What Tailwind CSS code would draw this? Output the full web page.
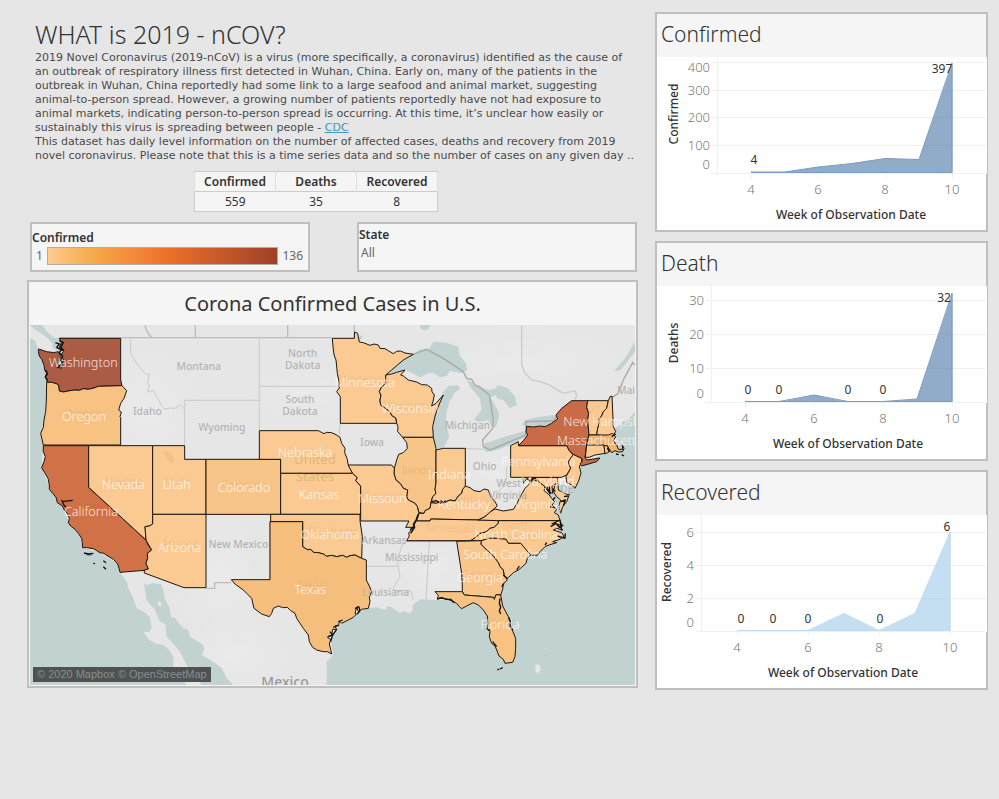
<!DOCTYPE html>
<html lang="en">
<head>
<meta charset="utf-8">
<meta name="viewport" content="width=device-width, initial-scale=1">
<title>2019-nCoV dashboard</title>
<script src="https://cdn.jsdelivr.net/npm/@tailwindcss/browser@4"></script>
</head>
<body class="min-h-screen bg-[#e6e6e6] text-[#333] font-['Noto_Sans','Open_Sans',sans-serif]">
<main class="grid grid-cols-[minmax(0,611fr)_minmax(0,333fr)] items-start gap-[17px] pt-3 pr-[11px] pl-[27px]">
  <div class="flex flex-col">
    <section class="pt-[5px] pl-2">
      <h1 class="text-[25px] leading-[34px] font-light">WHAT is 2019 - nCOV?</h1>
      <p class="whitespace-nowrap font-['DejaVu_Sans',sans-serif] text-[11px] leading-[14px] text-[#4a4a4a]">2019 Novel Coronavirus (2019-nCoV) is a virus (more specifically, a coronavirus) identified as the cause of<br>an outbreak of respiratory illness first detected in Wuhan, China. Early on, many of the patients in the<br>outbreak in Wuhan, China reportedly had some link to a large seafood and animal market, suggesting<br>animal-to-person spread. However, a growing number of patients reportedly have not had exposure to<br>animal markets, indicating person-to-person spread is occurring. At this time, it’s unclear how easily or<br>sustainably this virus is spreading between people - <a href="#cdc" class="text-[#3f97b5] underline">CDC</a><br>This dataset has daily level information on the number of affected cases, deaths and recovery from 2019<br>novel coronavirus. Please note that this is a time series data and so the number of cases on any given day ..</p>
    </section>

    <table class="mt-2 ml-[167px] w-[244px] table-fixed border-collapse border border-[#cccccc] bg-[#f5f5f5] text-center text-[12px] leading-[19px]">
      <thead><tr class="border-b border-[#cccccc]">
        <th class="border-x border-[#dedede] font-semibold">Confirmed</th><th class="border-x border-[#dedede] font-semibold">Deaths</th><th class="border-x border-[#dedede] font-semibold">Recovered</th></tr></thead>
      <tbody><tr><td>559</td><td>35</td><td>8</td></tr></tbody>
    </table>

    <div class="mt-[10px] mr-px ml-[3px] flex justify-between gap-[47px]">
      <section class="h-[50px] flex-1 border-2 border-[#bfbfbf] bg-[#f5f5f5] pt-[6px]">
        <h2 class="text-[12px] leading-[16px] font-semibold">Confirmed</h2>
        <div class="flex h-[20px] items-center gap-1 pr-[5px] pl-1 text-[12px] text-[#666]">
          <span>1</span>
          <div class="h-[18px] flex-1 border border-[#b5ada0] bg-[linear-gradient(to_right,#ffcb8f,#f5a94a_20%,#f58a3a_37%,#ec7128_52%,#c95a2a_74%,#9e4028)]"></div>
          <span>136</span>
        </div>
      </section>
      <section class="h-[50px] flex-1 border-2 border-[#bfbfbf] bg-[#f5f5f5] pt-[3px]">
        <label for="state" class="block text-[12px] leading-[16px] font-semibold">State</label>
        <select id="state" class="block w-full appearance-none bg-transparent pl-[2px] text-[12px] leading-[20px] text-[#666]"><option>All</option></select>
      </section>
    </div>

    <section class="mt-2 border-2 border-[#bfbfbf] bg-[#f5f5f5]">
      <h2 class="text-center text-[20px] leading-[43px]">Corona Confirmed Cases in U.S.</h2>
      <div class="relative px-px pb-px">
        <svg viewBox="30 15 1815 1080" class="block w-full" role="img" aria-label="Map of confirmed cases by state">
          <defs>
            <radialGradient id="relief"><stop offset="0" stop-color="#ebebeb"/><stop offset="1" stop-color="#e7e7e7" stop-opacity="0"/></radialGradient>
          </defs>
          <rect x="30" y="15" width="1815" height="1080" fill="#e6e6e6"/>
          <g fill="url(#relief)">
            <ellipse cx="380" cy="280" rx="170" ry="220"/><ellipse cx="600" cy="760" rx="150" ry="200"/><ellipse cx="640" cy="1000" rx="180" ry="130"/><ellipse cx="1500" cy="130" rx="330" ry="120"/><ellipse cx="1240" cy="740" rx="130" ry="110"/><ellipse cx="1420" cy="450" rx="100" ry="100"/><ellipse cx="850" cy="220" rx="160" ry="90"/>
          </g>
          <g fill="#c1d2d1">
            <path d="M30,55 45,62 52,80 70,95 100,93 120,110 120,150 80,187 78,250 72,300 62,340 70,377 65,443 88,500 133,570 147,608 185,655 188,683 240,698 293,732 300,757 320,785 325,805 340,835 350,865 372,876 390,892 395,925 388,936 370,935 385,958 410,972 430,975 448,990 460,1010 460,1040 480,1070 500,1095 30,1095Z"/>
            <path d="M30,15H66L85,40 105,55 120,50 128,75 120,95 98,85 96,68 78,50 45,28Z"/>
            <path d="M372,792 380,795 400,788 410,792 422,791 430,810 435,840 448,862 453,892 462,892 490,925 505,930 510,950 550,975 552,990 545,1005 580,1025 605,1045 620,1075 640,1095H545L525,1070 500,1035 480,995 455,965 440,950 436,912 420,905 405,870 380,840Z"/>
            <path d="M920,1095V1025L940,1005 930,955 965,910 1015,875 1045,865 1070,862 1095,870 1103,858 1115,862 1140,880 1150,874 1172,880 1178,870 1178,855 1200,838 1245,840 1350,840 1440,830 1450,780 1520,720 1560,690 1610,650 1615,600 1590,530 1580,505 1610,490 1650,500 1680,440 1750,400 1790,370 1780,330 1795,318 1812,300 1825,298 1845,275V1095Z"/>
            <path d="M1097,165 1140,125 1175,105 1200,88 1225,90 1240,65 1280,68 1315,80 1318,105 1338,130 1342,150 1325,160 1290,152 1280,168 1260,172 1240,158 1225,160 1200,172 1175,158 1155,150 1130,157Z"/>
            <path d="M1200,15H1230L1225,28 1212,32 1202,25ZM1010,55 1030,45 1022,60Z"/>
            <path d="M1252,388 1238,350 1242,290 1252,255 1270,215 1285,198 1315,196 1320,206 1300,222 1296,235 1290,240 1280,275 1278,310 1288,350 1270,383Z"/>
            <path d="M1340,178 1378,200 1405,210 1430,205 1430,195 1462,203 1485,230 1490,255 1470,265 1450,240 1432,236 1428,225 1412,232 1435,275 1437,292 1428,320 1415,322 1405,300 1375,305 1362,298 1385,270 1380,235 1350,200Z"/>
            <path d="M1390,387 1395,370 1420,362 1460,348 1515,333 1520,348 1470,375 1430,390 1400,396Z"/>
            <path d="M1505,315 1515,300 1550,292 1600,285 1613,290 1605,305 1570,318 1530,322Z"/>
            <path d="M1785,150 1815,115 1845,65V95L1802,150 1788,153Z"/>
          </g>
          <path d="M415,843 425,850 422,860 414,855ZM1546,1035 1558,1033 1562,1048 1554,1062 1546,1052ZM1558,1058 1568,1072M1577,982 1582,985 1578,987Z" fill="#e6e6e6"/>
          <!-- borders of the base map -->
          <g fill="none" stroke="#bcbcbc" stroke-width="4">
            <path d="M120,53H937M1003,53 1003,15M375,15 378,28 388,45 396,53M526,15V53M803,15V53M558,805H584V788H634"/>
            <path d="M1180,103 1220,88 1270,115 1330,155 1340,175 1355,178 1365,195 1378,200 1408,225 1420,300 1418,325 1388,360 1390,380 1410,390 1470,365 1518,345 1518,305 1600,303 1613,285 1655,242M1777,232 1795,220 1810,180 1838,128 1845,135" stroke="#a8a8a8"/>
            <path d="M1505,15V135L1515,160 1535,180 1560,185 1590,195 1615,212 1630,220 1665,212 1670,225 1665,242" stroke="#cbcbcb"/>
          </g>
          <g fill="none" stroke="#c9c9c9" stroke-width="3">
            <path d="M332,55V100L350,130 375,160 388,165 382,185 388,200 383,215 400,212 410,230 432,268 450,264 465,265 480,255 494,268M494,377V241H718M718,55V332M718,199H952M494,418H718M961,310 958,330 960,345M961,310H1130M1039,739H1135L1132,720 1150,665M1135,739 1140,770 1130,785 1118,812H1172L1180,838M1228,665 1218,838M1336,385 1390,388M1460,440 1460,472 1455,490 1440,510 1425,540"/>
            <path d="M558,583H752M750,778V605M1310,664H1160" stroke="#999"/>
          </g>
          <!-- states with confirmed cases -->
          <g stroke="#1c1710" stroke-width="3" stroke-linejoin="round" fill="#fbca92">
            <path fill="#ac5b45" d="M118,55H302V180L306,197 235,199 222,204 205,208 190,206 178,211 165,210 150,212 130,216 118,213 116,198 112,192 95,187 80,187 82,180 76,172 80,160 74,150 72,135 65,118 58,108 55,95 56,87 80,95 100,98 115,95 122,110 114,130 122,146 130,120 124,102 130,95 118,82 124,68Z"/>
            <path fill="#f8c283" d="M80,187 95,187 112,192 116,198 118,213 130,216 150,212 165,210 178,211 190,206 205,208 222,204 235,199 306,197 320,212 312,235 302,250 296,270 304,276 300,290 302,292V375H70L62,340 70,322 72,300 77,275 79,240Z"/>
            <path fill="#d07147" d="M70,377H206V502L378,660 384,674 395,690 382,700 383,715 378,730 385,747 375,751 300,757 297,745 293,732 280,718 270,712 258,705 252,700 240,698 220,686 200,683 188,683 187,668 185,655 175,640 165,628 152,618 145,608 148,595 143,582 133,570 127,558 112,548 108,532 98,520 88,508 88,495 84,475 74,458 65,443 72,425 76,410 70,395Z"/>
            <path d="M206,377H398V612L388,618 375,620 377,640 378,660 206,502Z"/>
            <path d="M398,377H494V418H558V583H398Z"/>
            <path d="M398,583H558V803H492L373,759 373,750 385,747 378,730 383,715 382,700 395,690 378,660 375,620 388,618 398,612Z"/>
            <path fill="#f8c588" d="M558,418H782V583H558Z"/>
            <path d="M718,332H895L912,341 920,337 935,338 948,344 960,352 965,370 975,385 974,398 982,418 984,432 998,460H782V418H718Z"/>
            <path d="M782,460H998L1012,473 1007,482 1022,498V583H782Z"/>
            <path d="M752,583H1020V602L1027,650 1025,715 1005,705 990,707 980,712 968,706 950,710 935,706 920,709 910,702 895,698 880,697 872,688 862,689 848,680V605H752Z"/>
            <path fill="#f6be7d" d="M750,605H848V680L862,689 872,688 880,697 895,698 910,702 920,709 935,706 950,710 968,706 980,712 990,707 1005,705 1025,715 1039,720V780L1048,798 1055,815 1048,832 1050,845 1045,865 1025,868 1015,875 1010,862 1005,880 1010,882 1000,892 985,900 965,910 958,903 956,918 945,918 950,928 938,928 935,945 922,952 932,958 928,972 932,988 935,1002 922,995 910,995 890,990 878,982 868,965 865,945 850,925 840,910 830,895 825,880 812,872 802,862 788,863 775,858 760,865 755,880 748,890 725,882 702,865 695,835 680,820 670,810 645,792 634,779H750Z"/>
            <path d="M937,55H1003L1004,36 1013,40 1018,66 1030,68 1050,76 1062,72 1075,75 1080,85 1095,86 1105,92 1120,101 1130,94 1142,93 1155,99 1180,103 1150,120 1115,150 1097,165V190L1084,202 1078,215 1083,225 1080,240 1082,255 1092,262 1110,275 1115,286 1128,295 1130,310H961V230L950,215 958,204 956,180 952,160 950,138 948,120 943,108 940,90Z"/>
            <path d="M1097,165 1115,162 1130,157 1155,150 1142,165 1150,168 1165,180 1190,186 1205,194 1222,195 1235,205 1236,215 1243,225 1240,240 1235,258 1248,250 1270,225 1258,252 1246,285 1238,320 1240,352H1148L1133,335 1134,320 1130,310 1128,295 1115,286 1110,275 1092,262 1082,255 1080,240 1083,225 1078,215 1084,202 1097,190Z"/>
            <path fill="#f8c588" d="M1148,352H1240L1248,385V490L1245,508 1248,520 1238,530 1233,548 1230,565 1215,572 1212,580 1197,578 1192,560 1185,550 1165,540 1160,530 1163,510 1150,505 1142,492 1128,480 1122,462 1123,445 1130,420 1136,403 1150,398 1162,385 1160,368Z"/>
            <path d="M984,435H1115L1123,445 1122,462 1128,480 1142,492 1150,505 1163,510 1160,530 1165,540 1185,550 1192,560 1197,580 1192,590 1188,605 1182,622H1157L1167,603H1022V498L1007,482 1012,473 998,460Z"/>
            <path d="M1248,390 1270,385H1336V500L1328,508 1325,520 1315,528 1305,543 1290,540 1275,547 1262,543 1250,550 1233,548 1238,530 1248,520 1245,508 1248,490Z"/>
            <path d="M1336,498 1350,503 1362,512 1380,515 1392,507 1405,510 1412,530 1425,545 1432,558 1412,575 1395,590 1375,600 1232,597 1230,603H1190L1197,580 1212,580 1215,572 1230,565 1233,548 1250,550 1262,543 1275,547 1290,540 1305,543 1315,528 1325,520 1328,508Z"/>
            <path d="M1188,603H1230L1232,597 1375,600H1435V610L1422,622 1410,625 1398,636 1380,640 1368,652 1352,662H1160L1168,648 1166,638 1177,628Z"/>
            <path d="M1375,600 1395,590 1412,575 1425,567 1450,573 1480,568 1490,552 1498,535 1515,505 1530,490 1545,474 1560,488 1575,500 1572,512 1588,525 1595,535 1604,545 1596,555 1610,568 1603,578 1615,585 1620,602H1435Z"/>
            <path d="M1508,472H1612L1615,510 1640,523H1648L1640,545 1628,560 1622,580 1616,560 1622,540 1610,530 1600,515 1606,490 1596,500 1598,520 1584,515 1575,500 1560,488 1545,474 1530,482 1520,476 1510,490Z"/>
            <path d="M1472,377 1495,365V377H1640L1648,392 1660,405 1645,425 1652,445 1640,465 1625,472H1472Z"/>
            <path d="M1660,403 1685,415V430L1678,438 1683,460 1675,485 1665,505 1655,495 1640,487 1638,470 1652,445 1645,425Z"/>
            <path fill="#c96b46" d="M1497,375 1510,362 1523,345 1518,336 1520,319 1540,321 1560,318 1575,320 1595,310 1613,297 1608,285 1625,265 1655,242H1703L1700,262 1706,280 1703,300 1707,345 1700,375 1695,412 1700,420 1740,414 1730,425 1685,438 1680,432 1688,422 1685,415 1660,403 1648,392 1640,377H1497Z"/>
            <path d="M1703,242H1765L1760,265 1750,275 1745,288 1738,295 1738,310 1733,325 1730,345H1707L1703,300 1706,280 1700,262Z"/>
            <path d="M1765,242 1770,230 1776,228 1780,320 1787,335 1778,348 1730,345 1733,325 1738,310 1738,295 1745,288 1750,275 1760,265Z"/>
            <path fill="#f3b470" d="M1707,345H1765L1778,340 1787,350 1780,362 1790,375 1795,388 1808,388 1807,375 1812,385 1808,395 1795,396 1785,392 1775,398 1762,378 1700,375Z"/>
            <path d="M1700,375H1752L1755,400 1725,405 1707,412 1696,412Z"/>
            <path d="M1752,377H1762L1768,395 1755,402Z"/>
            <path d="M1435,602H1620L1627,618 1612,612 1628,630 1610,625 1600,630 1625,638 1632,648 1620,658 1598,665 1610,668 1590,674 1575,680 1560,695 1552,706 1530,705 1502,670H1465L1458,658 1430,655 1405,655 1385,662H1352L1368,652 1380,640 1398,636 1410,625 1422,622 1435,610Z"/>
            <path d="M1385,662 1405,655 1430,655 1458,658 1465,670H1502L1532,705 1522,715 1518,730 1505,742 1495,750 1480,758 1470,768 1458,778 1452,765 1450,750 1440,740 1435,728 1420,708 1400,690 1382,672Z"/>
            <path fill="#f9c78b" d="M1310,664 1385,662 1382,672 1400,690 1420,708 1435,728 1440,740 1450,750 1452,765 1462,780 1450,792 1448,808 1442,825 1428,824 1423,838 1420,832 1333,825 1327,815V795L1325,760Z"/>
            <path fill="#f8c283" d="M1245,815H1327L1333,825 1420,832 1423,838 1428,824 1442,825 1448,858 1465,890 1475,925 1487,955V985L1485,1010 1478,1027 1455,1030 1450,1018 1437,1008 1430,990 1425,978 1415,970 1408,950 1410,935 1402,925 1405,910 1402,888 1390,870 1375,855 1360,848 1340,858 1325,866 1318,860 1310,850 1295,842 1280,837 1262,835 1252,838 1255,826Z"/>
          </g>
          <!-- bays, inlets and islands -->
          <g fill="none" stroke="#111" stroke-width="4" stroke-linejoin="round">
            <path d="M106,68 118,72 110,82 124,90 118,98 128,108 122,120 128,130 118,138 112,144M118,62 130,68 122,82 132,92M78,150 82,162 76,170 82,182M125,540 132,556 138,562M126,545 158,541M192,699 205,702 220,700M200,704H215M220,730 225,731M250,722 258,728M250,740 258,748"/>
            <path d="M1440,835 1438,850 1442,862 1438,872 1442,882M1466,892 1472,905 1470,918 1478,930M1400,925 1410,932M1418,965 1430,980M1432,1050 1438,1047M1440,1047 1448,1043M1252,836 1265,833 1280,838 1292,838 1302,848"/>
            <path d="M1592,620 1608,610 1618,622 1630,615M1595,612 1620,600 1625,632M1612,648 1635,655 1636,640M1575,675 1580,668M1580,500 1590,522 1588,500M1598,540 1606,532M1590,560 1606,566M1632,530 1644,528M1622,545 1636,540 1630,558M1598,505 1606,515"/>
            <path d="M1005,866 1016,860 1020,872 1012,882M955,905 968,900M940,922 954,915M924,950 938,945 930,935M932,965 938,945 950,928M1775,350 1787,342M1788,402 1796,404M1805,404 1812,408M1762,384 1768,396"/>
            <path d="M1522,475 1530,484 1540,474 1550,484M1235,545 1248,542 1262,550 1278,542M1195,582 1188,600 1180,612 1184,622 1172,640M1450,765 1462,776M1490,750 1498,738M1445,800 1452,790M1170,630 1180,620"/>
          </g>
          <g fill="#c1d2d1" fill-opacity=".8"><path d="M1626,475 1640,490 1650,500 1645,520 1632,520 1630,495Z" fill="#e4e4e4"/><path d="M1608,560 1616,545 1622,585 1614,585Z"/></g>
          <path d="M430,390 455,402 463,425 455,432 440,415Z" fill="#efb97e" opacity=".6"/>
          <!-- base map names -->
          <g fill="#b4b4b4" font-size="31" font-weight="500" text-anchor="middle">
            <text x="536" y="151">Montana</text><text x="382" y="286">Idaho</text><text x="606" y="334">Wyoming</text>
            <text x="848" y="111">North</text><text x="848" y="146">Dakota</text><text x="840" y="248">South</text><text x="840" y="284">Dakota</text>
            <text x="1056" y="377">Iowa</text><text x="1342" y="328">Michigan</text><text x="1394" y="451">Ohio</text><text x="1466" y="501">West</text><text x="1464" y="537">Virginia</text>
            <text x="655" y="684">New Mexico</text><text x="1092" y="673">Arkansas</text><text x="1175" y="722">Mississippi</text><text x="1097" y="828">Louisiana</text><text x="1818" y="222">Mai</text><text x="1640" y="518">DE</text>
            <text x="795" y="1102" font-size="42" fill="#999">Mexico</text>
          </g>
          <g fill="#9a6a38" fill-opacity=".13" font-size="31" text-anchor="middle">
            <text x="196" y="127">Washington</text><text x="190" y="290">Oregon</text><text x="208" y="572">California</text><text x="310" y="494">Nevada</text><text x="470" y="493">Utah</text><text x="672" y="503">Colorado</text><text x="480" y="681">Arizona</text>
            <g font-size="40" fill-opacity=".26"><text x="885" y="432">United</text><text x="885" y="482">States</text></g><text x="1030" y="188">Minnesota</text><text x="1170" y="266">Wisconsin</text><text x="1193" y="462" fill-opacity=".2">Illinois</text><text x="1085" y="536">Missouri</text>
            <text x="940" y="645">Oklahoma</text><text x="872" y="808">Texas</text><text x="1290" y="635">Tennessee</text><text x="1490" y="627">North</text><text x="1490" y="662">Carolina</text><text x="1384" y="773">Georgia</text><text x="1440" y="914">Florida</text><text x="1360" y="550">Kentucky</text><text x="1636" y="334">New York</text><text x="1722" y="282">VT</text>
          </g>
          <!-- data labels -->
          <g fill="#fff" fill-opacity=".85" font-size="38" font-weight="300" text-anchor="middle">
            <text x="190" y="142">Washington</text><text x="192" y="304">Oregon</text><text x="213" y="588">California</text><text x="310" y="508">Nevada</text><text x="470" y="508">Utah</text><text x="672" y="517">Colorado</text><text x="479" y="697">Arizona</text>
            <text x="855" y="412">Nebraska</text><text x="897" y="538">Kansas</text><text x="930" y="657">Oklahoma</text><text x="871" y="822">Texas</text><text x="1034" y="202">Minnesota</text><text x="1171" y="280">Wisconsin</text><text x="1088" y="550">Missouri</text>
            <text x="1288" y="478">Indiana</text><text x="1332" y="568">Kentucky</text><text x="1548" y="568">Virginia</text><text x="1489" y="657">North Carolina</text><text x="1456" y="718">South Carolina</text><text x="1380" y="787">Georgia</text><text x="1440" y="928">Florida</text>
            <text x="1555" y="438">Pennsylvania</text><text x="1583" y="498">Maryland</text><text x="1630" y="318" text-anchor="start">New Hampshire</text><text x="1611" y="375" text-anchor="start">Massachusetts</text>
          </g>
        </svg>
        <p class="absolute bottom-1 left-1 bg-[#4e5252] px-1 font-['Liberation_Sans',sans-serif] text-[11px] leading-[15px] text-[#8a8d8d]">© 2020 Mapbox © OpenStreetMap</p>
      </div>
    </section>
  </div>

  <div class="flex flex-col gap-[9px]">
    <section class="border-2 border-[#bfbfbf] bg-white">
      <h2 class="h-[43px] bg-[#f5f5f5] pl-1 text-[21px] leading-[41px] font-light">Confirmed</h2>
      <svg viewBox="0 0 329 173" class="block w-full overflow-visible" role="img" aria-label="Confirmed by week">
        <rect x="328" width="2" height="117" fill="#fff"/>
        <path d="M55,5.5H329M55,33.5H329M55,60.5H329M55,88.5H329M55,116.5H329M60.5,0V116M94.5,117v4M161.5,117v4M228.5,117v4M295.5,117v4" stroke="#f0f0f0" fill="none"/>
        <path d="M94,115 128,115 161,110 195,106.5 228,101.5 262,102.5 295.5,6V116H94Z" fill="#4e79a7" fill-opacity=".62"/>
        <path d="M94,115 128,115 161,110 195,106.5 228,101.5 262,102.5 295,6V115.5H94" fill="none" stroke="#7c9dc3"/>
        <g font-size="13" font-weight="300" fill="#777" text-anchor="end"><text x="53" y="15">400</text><text x="53" y="38">300</text><text x="53" y="65">200</text><text x="53" y="93">100</text><text x="53" y="112">0</text></g>
        <g font-size="13" font-weight="300" fill="#777" text-anchor="middle"><text x="94" y="137">4</text><text x="161" y="137">6</text><text x="228" y="137">8</text><text x="295" y="137">10</text></g>
        <g font-size="12" fill="#333" text-anchor="middle"><text x="97" y="107">4</text><text x="285" y="16">397</text></g>
        <g font-size="12" font-weight="500" fill="#333" text-anchor="middle"><text x="194" y="162">Week of Observation Date</text><text transform="translate(21 57) rotate(-90)">Confirmed</text></g>
      </svg>
    </section>
    <section class="border-2 border-[#bfbfbf] bg-white">
      <h2 class="h-[43px] bg-[#f5f5f5] pl-1 text-[21px] leading-[41px] font-light">Death</h2>
      <svg viewBox="0 0 329 173" class="block w-full overflow-visible" role="img" aria-label="Deaths by week">
        <rect x="328" width="2" height="117" fill="#fff"/>
        <path d="M49,14.5H329M49,48.5H329M49,82.5H329M49,116.5H329M54.5,0V116M88.5,117v4M157.5,117v4M226.5,117v4M295.5,117v4" stroke="#f0f0f0" fill="none"/>
        <path d="M88,116 122,116 157,109 191,116 226,116 260,113 295.5,7V116Z" fill="#4e79a7" fill-opacity=".62"/>
        <path d="M88,115.5H122L157,109 191,115.5H226L260,113 295,7V115.5H88" fill="none" stroke="#7c9dc3"/>
        <g font-size="13" font-weight="300" fill="#777" text-anchor="end"><text x="47" y="19">30</text><text x="47" y="53">20</text><text x="47" y="87">10</text><text x="47" y="112">0</text></g>
        <g font-size="13" font-weight="300" fill="#777" text-anchor="middle"><text x="88" y="137">4</text><text x="157" y="137">6</text><text x="226" y="137">8</text><text x="295" y="137">10</text></g>
        <g font-size="12" fill="#333" text-anchor="middle"><text x="91" y="108">0</text><text x="122" y="108">0</text><text x="191" y="108">0</text><text x="226" y="108">0</text><text x="287" y="16">32</text></g>
        <g font-size="12" font-weight="500" fill="#333" text-anchor="middle"><text x="191" y="162">Week of Observation Date</text><text transform="translate(21 57) rotate(-90)">Deaths</text></g>
      </svg>
    </section>
    <section class="border-2 border-[#bfbfbf] bg-white">
      <h2 class="h-[43px] bg-[#f5f5f5] pl-1 text-[21px] leading-[41px] font-light">Recovered</h2>
      <svg viewBox="0 0 329 173" class="block w-full overflow-visible" role="img" aria-label="Recovered by week">
        <rect x="328" width="2" height="117" fill="#fff"/>
        <path d="M39,17.5H329M39,50.5H329M39,83.5H329M39,116.5H329M44.5,0V116M80.5,117v4M151.5,117v4M222.5,117v4M293.5,117v4" stroke="#f0f0f0" fill="none"/>
        <path d="M80,116H151L187,98.5 222,116 258,98.5 293.5,17V116Z" fill="#a0cbe8" fill-opacity=".62"/>
        <path d="M80,115.5H151L187,98.5 222,115.5 258,98.5 293,17V115.5H80" fill="none" stroke="#bddcf0"/>
        <g font-size="13" font-weight="300" fill="#777" text-anchor="end"><text x="37" y="22">6</text><text x="37" y="55">4</text><text x="37" y="88">2</text><text x="37" y="112">0</text></g>
        <g font-size="13" font-weight="300" fill="#777" text-anchor="middle"><text x="80" y="137">4</text><text x="151" y="137">6</text><text x="222" y="137">8</text><text x="293" y="137">10</text></g>
        <g font-size="12" fill="#333" text-anchor="middle"><text x="84" y="108">0</text><text x="116" y="108">0</text><text x="151" y="108">0</text><text x="223" y="108">0</text><text x="290" y="16">6</text></g>
        <g font-size="12" font-weight="500" fill="#333" text-anchor="middle"><text x="186" y="162">Week of Observation Date</text><text transform="translate(14 57) rotate(-90)">Recovered</text></g>
      </svg>
    </section>
  </div>
</main>
</body>
</html>
